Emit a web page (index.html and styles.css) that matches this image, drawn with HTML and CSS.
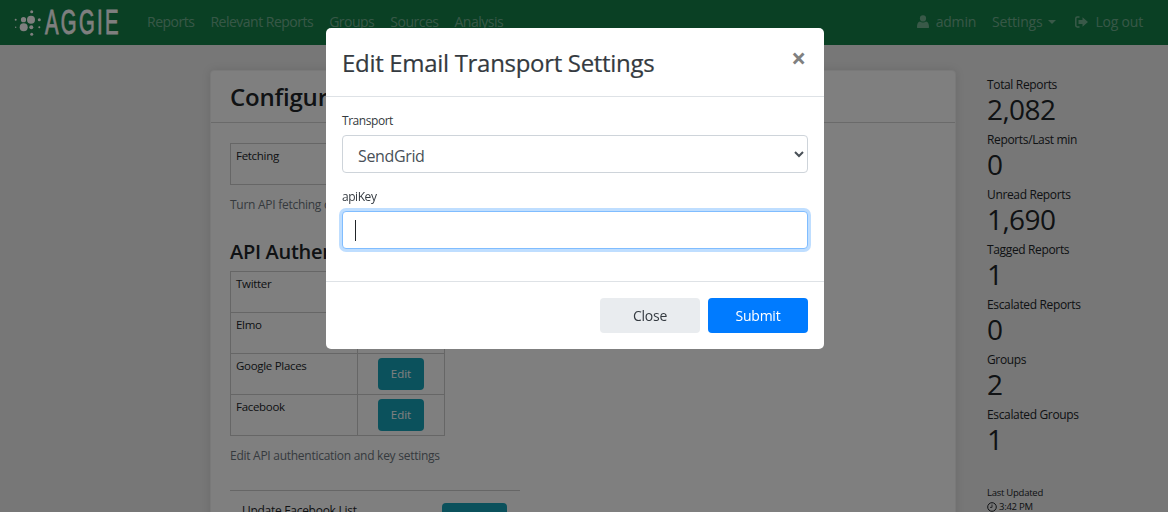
FILE: index.html
```html
<!DOCTYPE html>
<html lang="en">
<head>
<meta charset="utf-8">
<title>Aggie - Configuration</title>
<link rel="stylesheet" href="styles.css">
</head>
<body>
<header class="navbar">
  <a class="brand" href="#" aria-label="Aggie">
    <svg class="brand-logo" width="106" height="45" viewBox="14 0 106 45">
      <g class="brand-dots">
        <circle cx="23.7" cy="28.3" r="4"/><circle cx="31" cy="20.7" r="4"/>
        <circle cx="23.5" cy="20.7" r="2.6"/><circle cx="31.3" cy="28.3" r="2"/>
        <circle cx="31.7" cy="12.7" r="1.5"/><circle cx="31.7" cy="35.3" r="1.5"/>
        <circle cx="39.3" cy="20.7" r="1.5"/><circle cx="39.3" cy="28.3" r="1"/>
        <circle cx="15.7" cy="20.7" r="1"/><circle cx="15.7" cy="28.3" r=".7"/>
      </g>
      <text class="brand-text" transform="translate(45 35) scale(.58 1)">AGGIE</text>
    </svg>
  </a>
  <nav class="nav-main">
    <a href="#">Reports</a><a href="#">Relevant Reports</a><a href="#">Groups</a><a href="#">Sources</a><a href="#">Analysis</a>
  </nav>
  <nav class="nav-user">
    <a href="#"><svg class="nav-icon" width="12" height="13" viewBox="0 0 12 13"><circle cx="6" cy="3.4" r="3.1"/><path d="M.8 13c-.6 0-.8-.4-.8-1 0-3 .9-5.2 3-5.6.8.7 1.8 1.1 3 1.1s2.200-.4 3-1.100c2.100.4 3 2.600 3 5.600 0 .6-.2 1-.8 1z"/></svg>admin</a>
    <a href="#">Settings<span class="caret-down"></span></a>
    <a href="#"><svg class="nav-icon" width="13" height="12" viewBox="0 0 13 12"><path d="M4.500 1H2.200C1.300 1 .8 1.600.8 2.400v7.200c0 .8.500 1.400 1.400 1.400h2.300" fill="none" stroke="currentColor" stroke-width="1.500"/><path d="M7.500 1.200 13 6l-5.500 4.800V8H3.500V4h4z"/></svg>Log out</a>
  </nav>
</header>

<div class="layout">
  <main class="card">
    <h2 class="card-title">Configuration</h2>
    <div class="card-body">
      <table class="settings">
        <tr><td>Fetching</td><td class="cell-action"></td></tr>
      </table>
      <p class="muted">Turn API fetching on or off</p>
      <h4 class="section-title">API Authentication</h4>
      <table class="settings">
        <tr><td>Twitter</td><td class="cell-action"><button class="btn-edit">Edit</button></td></tr>
        <tr><td>Elmo</td><td class="cell-action"><button class="btn-edit">Edit</button></td></tr>
        <tr><td>Google Places</td><td class="cell-action"><button class="btn-edit">Edit</button></td></tr>
        <tr><td>Facebook</td><td class="cell-action"><button class="btn-edit">Edit</button></td></tr>
      </table>
      <p class="muted">Edit API authentication and key settings</p>
      <div class="update-row">
        <span>Update Facebook List</span>
        <button class="btn-edit btn-update">Update</button>
      </div>
    </div>
  </main>
  <aside class="stats">
    <div class="stat"><div class="stat-label">Total Reports</div><div class="stat-value">2,082</div></div>
    <div class="stat"><div class="stat-label">Reports/Last min</div><div class="stat-value">0</div></div>
    <div class="stat"><div class="stat-label">Unread Reports</div><div class="stat-value">1,690</div></div>
    <div class="stat"><div class="stat-label">Tagged Reports</div><div class="stat-value">1</div></div>
    <div class="stat"><div class="stat-label">Escalated Reports</div><div class="stat-value">0</div></div>
    <div class="stat"><div class="stat-label">Groups</div><div class="stat-value">2</div></div>
    <div class="stat"><div class="stat-label">Escalated Groups</div><div class="stat-value">1</div></div>
    <div class="updated">
      <div>Last Updated</div>
      <div class="updated-time"><svg width="10" height="10" viewBox="0 0 10 10"><circle cx="5" cy="5" r="4.300" fill="none" stroke="currentColor"/><path d="M5 2.500V5.400H3" fill="none" stroke="currentColor" stroke-width=".8"/></svg>3:42 PM</div>
    </div>
  </aside>
</div>

<div class="backdrop"></div>

<section class="modal" role="dialog" aria-label="Edit Email Transport Settings">
  <div class="modal-header">
    <h5 class="modal-title">Edit Email Transport Settings</h5>
    <span class="modal-close">×</span>
  </div>
  <form class="modal-body">
    <label class="field-label" for="transport">Transport</label>
    <select class="control control-select" id="transport"><option>SendGrid</option></select>
    <label class="field-label field-label-second">apiKey</label>
    <div class="control control-focus" role="textbox"><span class="text-caret"></span></div>
  </form>
  <div class="modal-footer">
    <button class="btn btn-close">Close</button>
    <button class="btn btn-submit">Submit</button>
  </div>
</section>
</body>
</html>
```
FILE: styles.css
```css
* { box-sizing: border-box; }
html, body { height: 512px; overflow: hidden; }
body {
  margin: 0;
  background: #eeeeee;
  color: #212529;
  font-family: "Open Sans", "Noto Sans", sans-serif;
  font-size: 12px;
  line-height: 1.5;
  letter-spacing: -.27px;
}
a { color: inherit; text-decoration: none; }

.navbar {
  display: flex;
  align-items: center;
  height: 45px;
  background: #148048;
  padding: 0 25px 2px 0;
  font-size: 14px;
  letter-spacing: -.5px;
}
.brand { display: block; height: 45px; margin: 0 27px 0 14px; }
.brand-logo { display: block; }
.brand-dots { fill: #ffffff; }
.brand-text {
  fill: #ffffff;
  stroke: #ffffff;
  stroke-width: .8px;
  font-family: "Liberation Sans", sans-serif;
  font-size: 35px;
  letter-spacing: 4px;
}
.nav-main, .nav-user { display: flex; color: rgba(255, 255, 255, .4); }
.nav-main { gap: 16px; }
.nav-user { gap: 16px; margin-left: auto; letter-spacing: -.2px; }
.nav-icon { fill: currentColor; margin-right: 7px; vertical-align: -1px; }
.caret-down {
  display: inline-block;
  margin: 0 3px 0 6px;
  vertical-align: 3px;
  border-top: 4px solid currentColor;
  border-left: 4px solid transparent;
  border-right: 4px solid transparent;
}

.layout {
  display: flex;
  align-items: flex-start;
  padding: 25px 0 0 210px;
}
.card {
  flex: 0 0 746px;
  background: #ffffff;
  border-radius: 4px;
  border: 1px solid #f2f2f2;
  box-shadow: 0 0 10px rgba(0, 0, 0, .1);
}
.card-title {
  margin: 0;
  height: 52px;
  padding: 8px 19px;
  font-size: 24px;
  font-weight: 600;
  line-height: 36px;
  letter-spacing: -.2px;
  border-bottom: 1px solid #d5d5d5;
}
.card-body { padding: 20px 19px 0; }
.settings { border-collapse: collapse; width: 215px; table-layout: fixed; }
.settings td {
  height: 41px;
  padding: 3px 5px;
  vertical-align: top;
  border: 1px solid #cccccc;
  font-size: 11.5px;
  letter-spacing: -.3px;
}
.cell-action { width: 87px; text-align: center; }
.settings .cell-action { padding-top: 4px; }
.muted { margin: 11px 0 0; height: 18px; color: #6c757d; line-height: 18px; }
.section-title {
  margin: 24px 0 0;
  height: 33px;
  font-size: 20px;
  font-weight: 600;
  line-height: 27px;
  letter-spacing: -.3px;
}
.btn-edit {
  display: block;
  margin: 0 auto;
  width: 46px;
  height: 32px;
  padding: 0;
  border: 0;
  border-radius: 4px;
  background: #17a2b8;
  color: #ffffff;
  font: inherit;
}
.update-row {
  display: flex;
  align-items: flex-start;
  justify-content: space-between;
  width: 290px;
  margin-top: 25px;
  padding: 12px 13px 0 12px;
  border-top: 1px solid #cccccc;
}
.update-row span { margin-top: -1px; line-height: 18px; }
.btn-update { width: 65px; height: 40px; margin: 0; }

.stats { margin-left: 31px; width: 170px; padding-top: 7px; }
.stat { height: 55px; }
.stat-label { font-size: 12px; line-height: 16px; letter-spacing: -.35px; }
.stat-value { margin-top: -1px; font-size: 28px; line-height: 34px; font-weight: 500; letter-spacing: -.6px; }
.updated { margin-top: 24px; font-size: 9.5px; line-height: 14px; letter-spacing: -.25px; }
.updated-time svg { margin-right: 2px; vertical-align: -2px; }

.backdrop {
  position: fixed;
  inset: 0;
  background: rgba(0, 0, 0, .5);
}
.modal {
  position: fixed;
  top: 28px;
  left: 326px;
  width: 498px;
  height: 321px;
  display: flex;
  flex-direction: column;
  background: #ffffff;
  border-radius: 5px;
}
.modal-header {
  display: flex;
  justify-content: space-between;
  height: 69px;
  padding: 16px 16px 0;
  border-bottom: 1px solid #dee2e6;
}
.modal-title {
  margin: 0;
  font-size: 24px;
  font-weight: 400;
  line-height: 38px;
  letter-spacing: -.31px;
  color: #343a40;
  -webkit-text-stroke: .2px #343a40;
}
.modal-close {
  margin: -4px 2px 0 0;
  height: 36px;
  font-size: 26px;
  font-weight: 700;
  line-height: 36px;
  letter-spacing: 0;
  color: #808080;
}
.modal-body { height: 184px; padding: 15px 16px 0; }
.field-label { display: block; color: #343a40; line-height: 18px; height: 23px; letter-spacing: -.45px; }
.field-label-second { margin-top: 15px; }
.control {
  display: block;
  width: 466px;
  height: 38px;
  padding: 6px 12px;
  background: #ffffff;
  border: 1px solid #ced4da;
  border-radius: 4px;
  color: #495057;
  font-family: inherit;
  font-size: 16px;
}
.control-select { padding: 8px 11px 6px; letter-spacing: -.35px; }
.control-focus {
  display: flex;
  align-items: center;
  border-color: #80bdff;
  box-shadow: 0 0 0 3px rgba(0, 123, 255, .25);
}
.text-caret { width: 1px; height: 21px; background: #212529; }
.modal-footer {
  display: flex;
  justify-content: flex-end;
  gap: 8px;
  height: 68px;
  padding: 16px;
  border-top: 1px solid #dee2e6;
}
.btn {
  width: 100px;
  height: 35px;
  padding: 0;
  border: 0;
  border-radius: 4px;
  font-family: inherit;
  font-size: 14px;
  letter-spacing: -.25px;
}
.btn-close { background: #e9ecef; color: #343a40; }
.btn-submit { background: #007bff; color: #ffffff; font-weight: 500; }
```
